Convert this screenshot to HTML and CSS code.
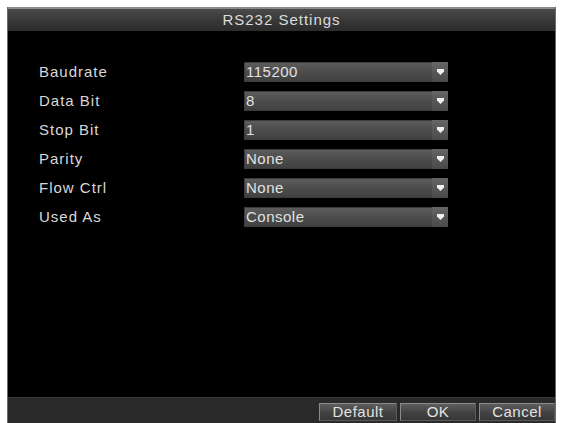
FILE: index.html
```html
<!DOCTYPE html>
<html>
<head>
<meta charset="utf-8">
<link rel="stylesheet" href="styles.css">
</head>
<body>
<div class="panel">
  <div class="titlebar">RS232 Settings</div>
  <div class="content">
    <div class="form">
      <div class="label">Baudrate</div>
      <div class="select"><span class="val">115200</span><span class="cap"><svg width="7" height="6" viewBox="0 0 7 6"><path d="M0 0H7V2.5L3.5 6L0 2.5Z" fill="#f0f0f0"/></svg></span></div>
      <div class="label">Data Bit</div>
      <div class="select"><span class="val">8</span><span class="cap"><svg width="7" height="6" viewBox="0 0 7 6"><path d="M0 0H7V2.5L3.5 6L0 2.5Z" fill="#f0f0f0"/></svg></span></div>
      <div class="label">Stop Bit</div>
      <div class="select"><span class="val">1</span><span class="cap"><svg width="7" height="6" viewBox="0 0 7 6"><path d="M0 0H7V2.5L3.5 6L0 2.5Z" fill="#f0f0f0"/></svg></span></div>
      <div class="label">Parity</div>
      <div class="select"><span class="val">None</span><span class="cap"><svg width="7" height="6" viewBox="0 0 7 6"><path d="M0 0H7V2.5L3.5 6L0 2.5Z" fill="#f0f0f0"/></svg></span></div>
      <div class="label">Flow Ctrl</div>
      <div class="select"><span class="val">None</span><span class="cap"><svg width="7" height="6" viewBox="0 0 7 6"><path d="M0 0H7V2.5L3.5 6L0 2.5Z" fill="#f0f0f0"/></svg></span></div>
      <div class="label">Used As</div>
      <div class="select"><span class="val">Console</span><span class="cap"><svg width="7" height="6" viewBox="0 0 7 6"><path d="M0 0H7V2.5L3.5 6L0 2.5Z" fill="#f0f0f0"/></svg></span></div>
    </div>
  </div>
  <div class="footer">
    <div class="btn btn-default">Default</div>
    <div class="btn btn-ok">OK</div>
    <div class="btn btn-cancel">Cancel</div>
  </div>
</div>
</body>
</html>
```
FILE: styles.css
```css
html { background: #ffffff; }
body {
  margin: 7px 0 0 7px;
  font-family: "Liberation Sans", Arial, sans-serif;
}
.panel {
  width: 549px;
  height: 416px;
  background: #000;
  display: flex;
  flex-direction: column;
  box-sizing: border-box;
  border-left: 1px solid #6a6a6a;
  border-right: 1px solid #6a6a6a;
}
.titlebar {
  height: 24px;
  box-sizing: border-box;
  border-top: 2px solid #8a8a8a;
  background: linear-gradient(#4a4a4a, #363636 60%, #2c2c2c);
  color: #dcdcdc;
  font-size: 15px;
  letter-spacing: 1px;
  text-align: center;
  line-height: 21px;
}
.content {
  flex: 1;
  padding: 31px 0 0 31px;
}
.form {
  display: grid;
  grid-template-columns: 205px 204px;
  row-gap: 9px;
  grid-auto-rows: 20px;
}
.label {
  color: #d8d8d8;
  font-size: 15px;
  letter-spacing: 1px;
  line-height: 20px;
}
.select {
  display: flex;
  align-items: stretch;
  background: linear-gradient(#5e5e5e, #4c4c4c 50%, #404040);
  box-shadow: inset 0 0 0 1px #3c3c3c;
}
.val {
  flex: 1;
  color: #e2e2e2;
  font-size: 15px;
  letter-spacing: 0.5px;
  line-height: 20px;
  padding-left: 2px;
}
.cap {
  width: 16px;
  display: flex;
  align-items: center;
  justify-content: center;
  background: linear-gradient(#666, #575757 50%, #4a4a4a);
}
.cap svg { display: block; }
.footer {
  height: 26px;
  background: #2a2a2a;
  border-top: 1px solid #3a3a3a;
  box-sizing: border-box;
  display: flex;
  justify-content: flex-end;
  align-items: flex-start;
  padding-top: 5px;
  gap: 3px;
}
.btn {
  height: 18px;
  box-sizing: border-box;
  border: 1px solid #8a8a8a;
  border-right-color: #5a5a5a;
  border-bottom-color: #5a5a5a;
  background: linear-gradient(#5e5e5e, #444 50%, #363636);
  color: #e2e2e2;
  font-size: 15px;
  letter-spacing: 0.5px;
  line-height: 15px;
  text-align: center;
}
.btn-default { width: 78px; }
.btn-ok { width: 76px; }
.btn-cancel { width: 76px; }
```
